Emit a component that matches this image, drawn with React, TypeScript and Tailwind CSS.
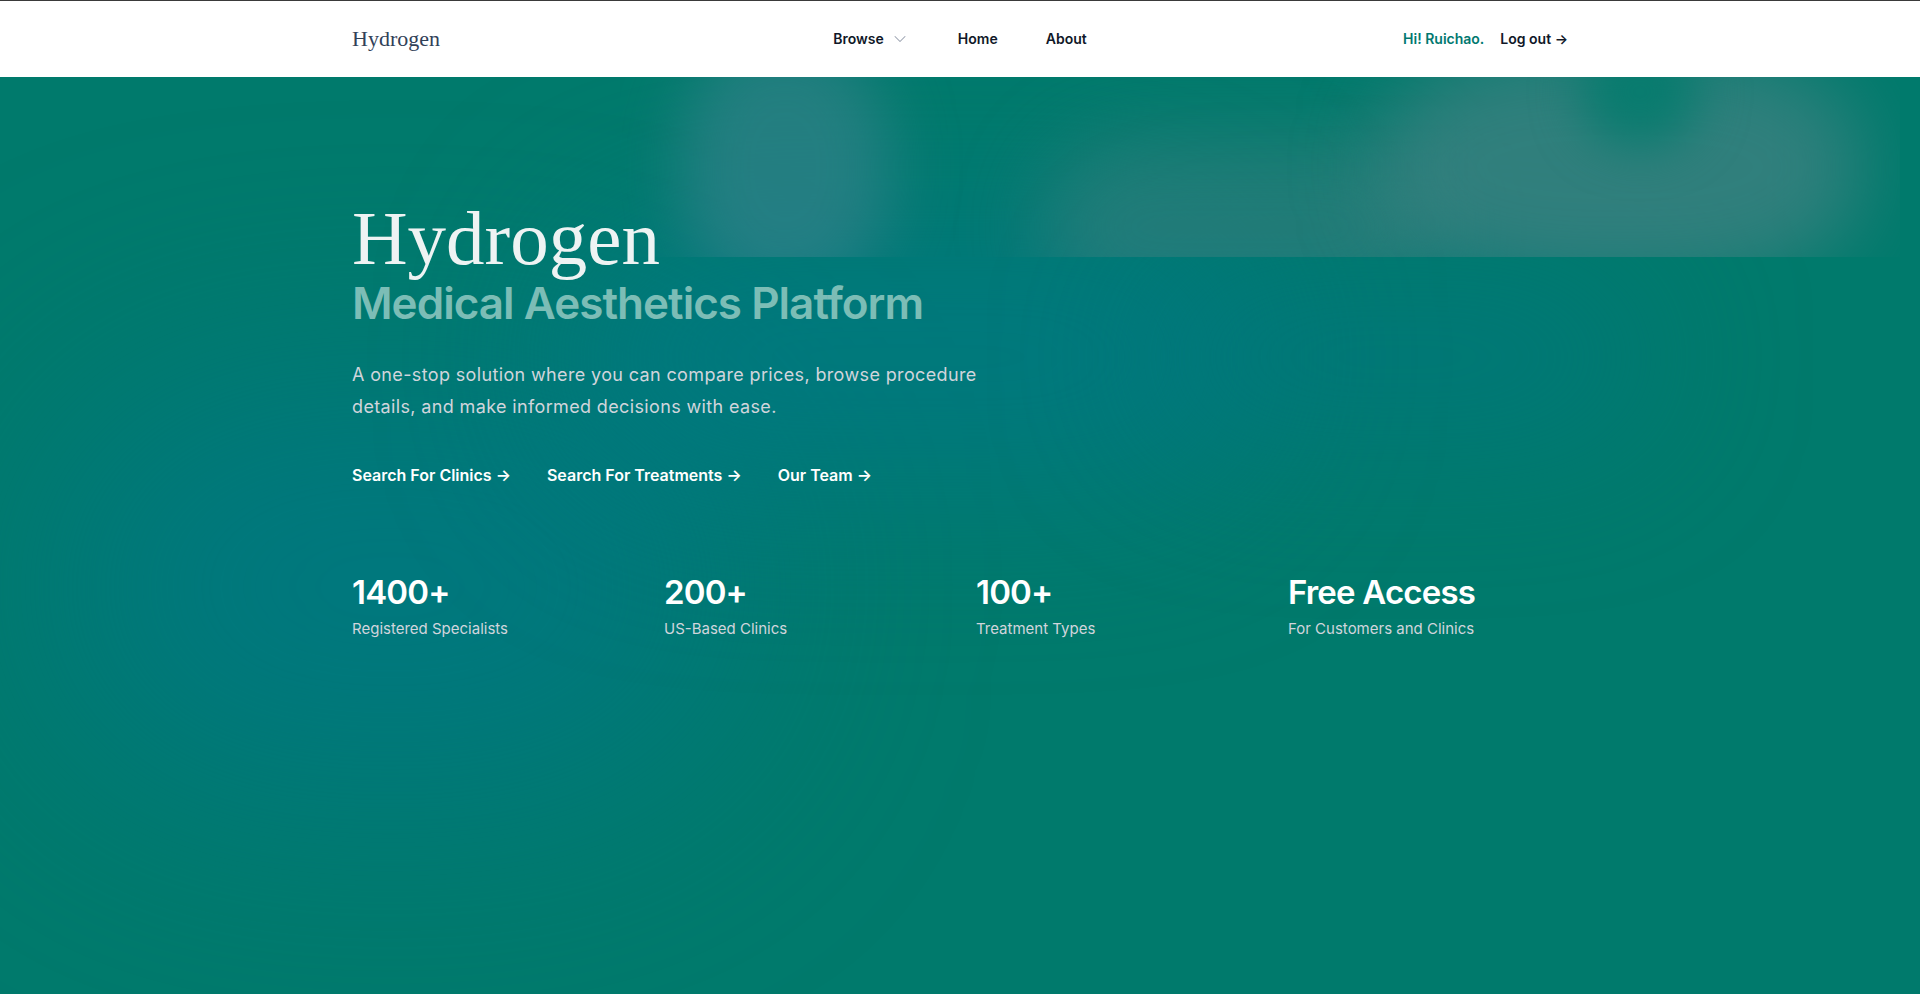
import { ChevronDown } from 'lucide-react'

const stats = [
  { value: '1400+', label: 'Registered Specialists' },
  { value: '200+', label: 'US-Based Clinics' },
  { value: '100+', label: 'Treatment Types' },
  { value: 'Free Access', label: 'For Customers and Clinics' },
]

const links = ['Search For Clinics', 'Search For Treatments', 'Our Team']

export default function App() {
  return (
    <div className="min-h-screen border-t border-[#3a3a3a] bg-[#007a6c] font-['Inter',sans-serif]">
      <header className="bg-white">
        <nav className="mx-auto flex h-[76px] max-w-7xl items-center justify-between px-8">
          <div className="flex flex-1">
            <a href="#" className="font-['Liberation_Serif',serif] text-[22px] leading-7 text-slate-700">
              Hydrogen
            </a>
          </div>
          <div className="flex items-center gap-x-12 text-sm font-semibold text-gray-900">
            <button className="flex items-center gap-x-1.5">
              Browse
              <ChevronDown className="h-5 w-5 text-gray-400" strokeWidth={1.25} />
            </button>
            <a href="#">Home</a>
            <a href="#">About</a>
          </div>
          <div className="flex flex-1 items-center justify-end gap-x-4 text-sm font-semibold">
            <span className="text-teal-700">Hi! Ruichao.</span>
            <a href="#" className="text-gray-900">
              Log out <span aria-hidden="true">&rarr;</span>
            </a>
          </div>
        </nav>
      </header>

      <main className="relative isolate min-h-[917px] overflow-hidden">
        {/* soft background shapes */}
        <div className="absolute inset-0 -z-10">
          <div className="absolute left-[40px] top-[300px] h-[420px] w-[700px] rounded-full bg-[#00778a]/60 blur-[120px]" />
          <div className="absolute left-[560px] top-[150px] h-[260px] w-[700px] rounded-full bg-[#00788a]/60 blur-[90px]" />
          <div className="absolute left-[1150px] top-[200px] h-[160px] w-[500px] rounded-full bg-[#007586]/50 blur-[80px]" />
          <div className="absolute left-[620px] top-0 h-[180px] w-[1280px] overflow-hidden">
            <div className="absolute left-[60px] top-[-40px] h-[260px] w-[210px] rounded-[45%] bg-[#3f8490]/55 blur-[32px]" />
            <div className="absolute left-[420px] top-[60px] h-[180px] w-[400px] rounded-full bg-[#3f8080]/50 blur-[40px]" />
            <div className="absolute left-[760px] top-[-30px] h-[240px] w-[480px] rounded-[40%] bg-[#4a8285]/65 blur-[40px]" />
            <div className="absolute left-[960px] top-[-40px] h-[110px] w-[120px] rounded-full bg-[#007a6c]/80 blur-[24px]" />
          </div>
        </div>

        <div className="mx-auto max-w-7xl px-8 pt-[123px]">
          <h1>
            <span className="block font-['Liberation_Serif',serif] text-[77px] leading-none text-[#eef3f3]">
              Hydrogen
            </span>
            <span className="mt-[4px] block text-[44px] font-semibold leading-none tracking-[-0.022em] text-[#7cbdb6]">
              Medical Aesthetics Platform
            </span>
          </h1>
          <p className="mt-[34px] max-w-[640px] text-lg leading-8 tracking-[0.02em] text-gray-300">
            A one-stop solution where you can compare prices, browse procedure details, and make informed
            decisions with ease.
          </p>
          <div className="mt-10 flex gap-x-9">
            {links.map((l) => (
              <a key={l} href="#" className="text-base font-semibold text-white">
                {l} <span aria-hidden="true">&rarr;</span>
              </a>
            ))}
          </div>

          <dl className="mt-[85px] grid grid-cols-4 gap-8">
            {stats.map((s) => (
              <div key={s.value} className="flex flex-col">
                <dt className="text-[33px] font-semibold leading-10 tracking-tight text-white">{s.value}</dt>
                <dd className="mt-[5px] text-[15px] leading-6 text-gray-300">{s.label}</dd>
              </div>
            ))}
          </dl>
        </div>
      </main>
    </div>
  )
}
